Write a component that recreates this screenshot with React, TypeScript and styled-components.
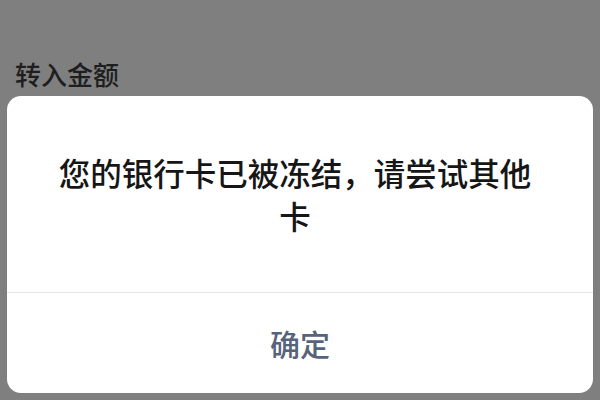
import styled, { createGlobalStyle } from 'styled-components';

const GlobalStyle = createGlobalStyle`
  html, body {
    margin: 0;
    padding: 0;
    background: #7f7f7f;
  }
  body {
    font-family: "Noto Sans CJK SC", "Noto Sans", sans-serif;
  }
`;

const App = () => {
  return (
    <>
      <GlobalStyle />
      <Page>
        <FieldLabel>转入金额</FieldLabel>
        <Dialog>
          <Message>您的银行卡已被冻结，请尝试其他卡</Message>
          <ConfirmButton type="button">确定</ConfirmButton>
        </Dialog>
      </Page>
    </>
  );
};

const Page = styled.div`
  display: flex;
  flex-direction: column;
  height: 400px;
  box-sizing: border-box;
  padding: 56px 7px 7px;
  background: #7f7f7f;
`;

const FieldLabel = styled.div`
  padding-left: 8px;
  font-size: 26px;
  font-weight: 500;
  line-height: 36px;
  color: #1e1e1e;
`;

const Dialog = styled.div`
  flex: 1;
  display: flex;
  flex-direction: column;
  margin-top: 4px;
  background: #ffffff;
  border-radius: 14px;
  overflow: hidden;
`;

const Message = styled.div`
  flex: 1;
  display: flex;
  align-items: center;
  justify-content: center;
  padding: 0 52px 0 42px;
  font-size: 31.5px;
  font-weight: 500;
  line-height: 43px;
  text-align: center;
  color: #161616;
`;

const ConfirmButton = styled.button`
  height: 101px;
  border: none;
  border-top: 1px solid #e6e6e6;
  background: transparent;
  font-family: inherit;
  font-size: 30px;
  font-weight: 500;
  color: #56637a;
  cursor: pointer;
`;

export default App;
